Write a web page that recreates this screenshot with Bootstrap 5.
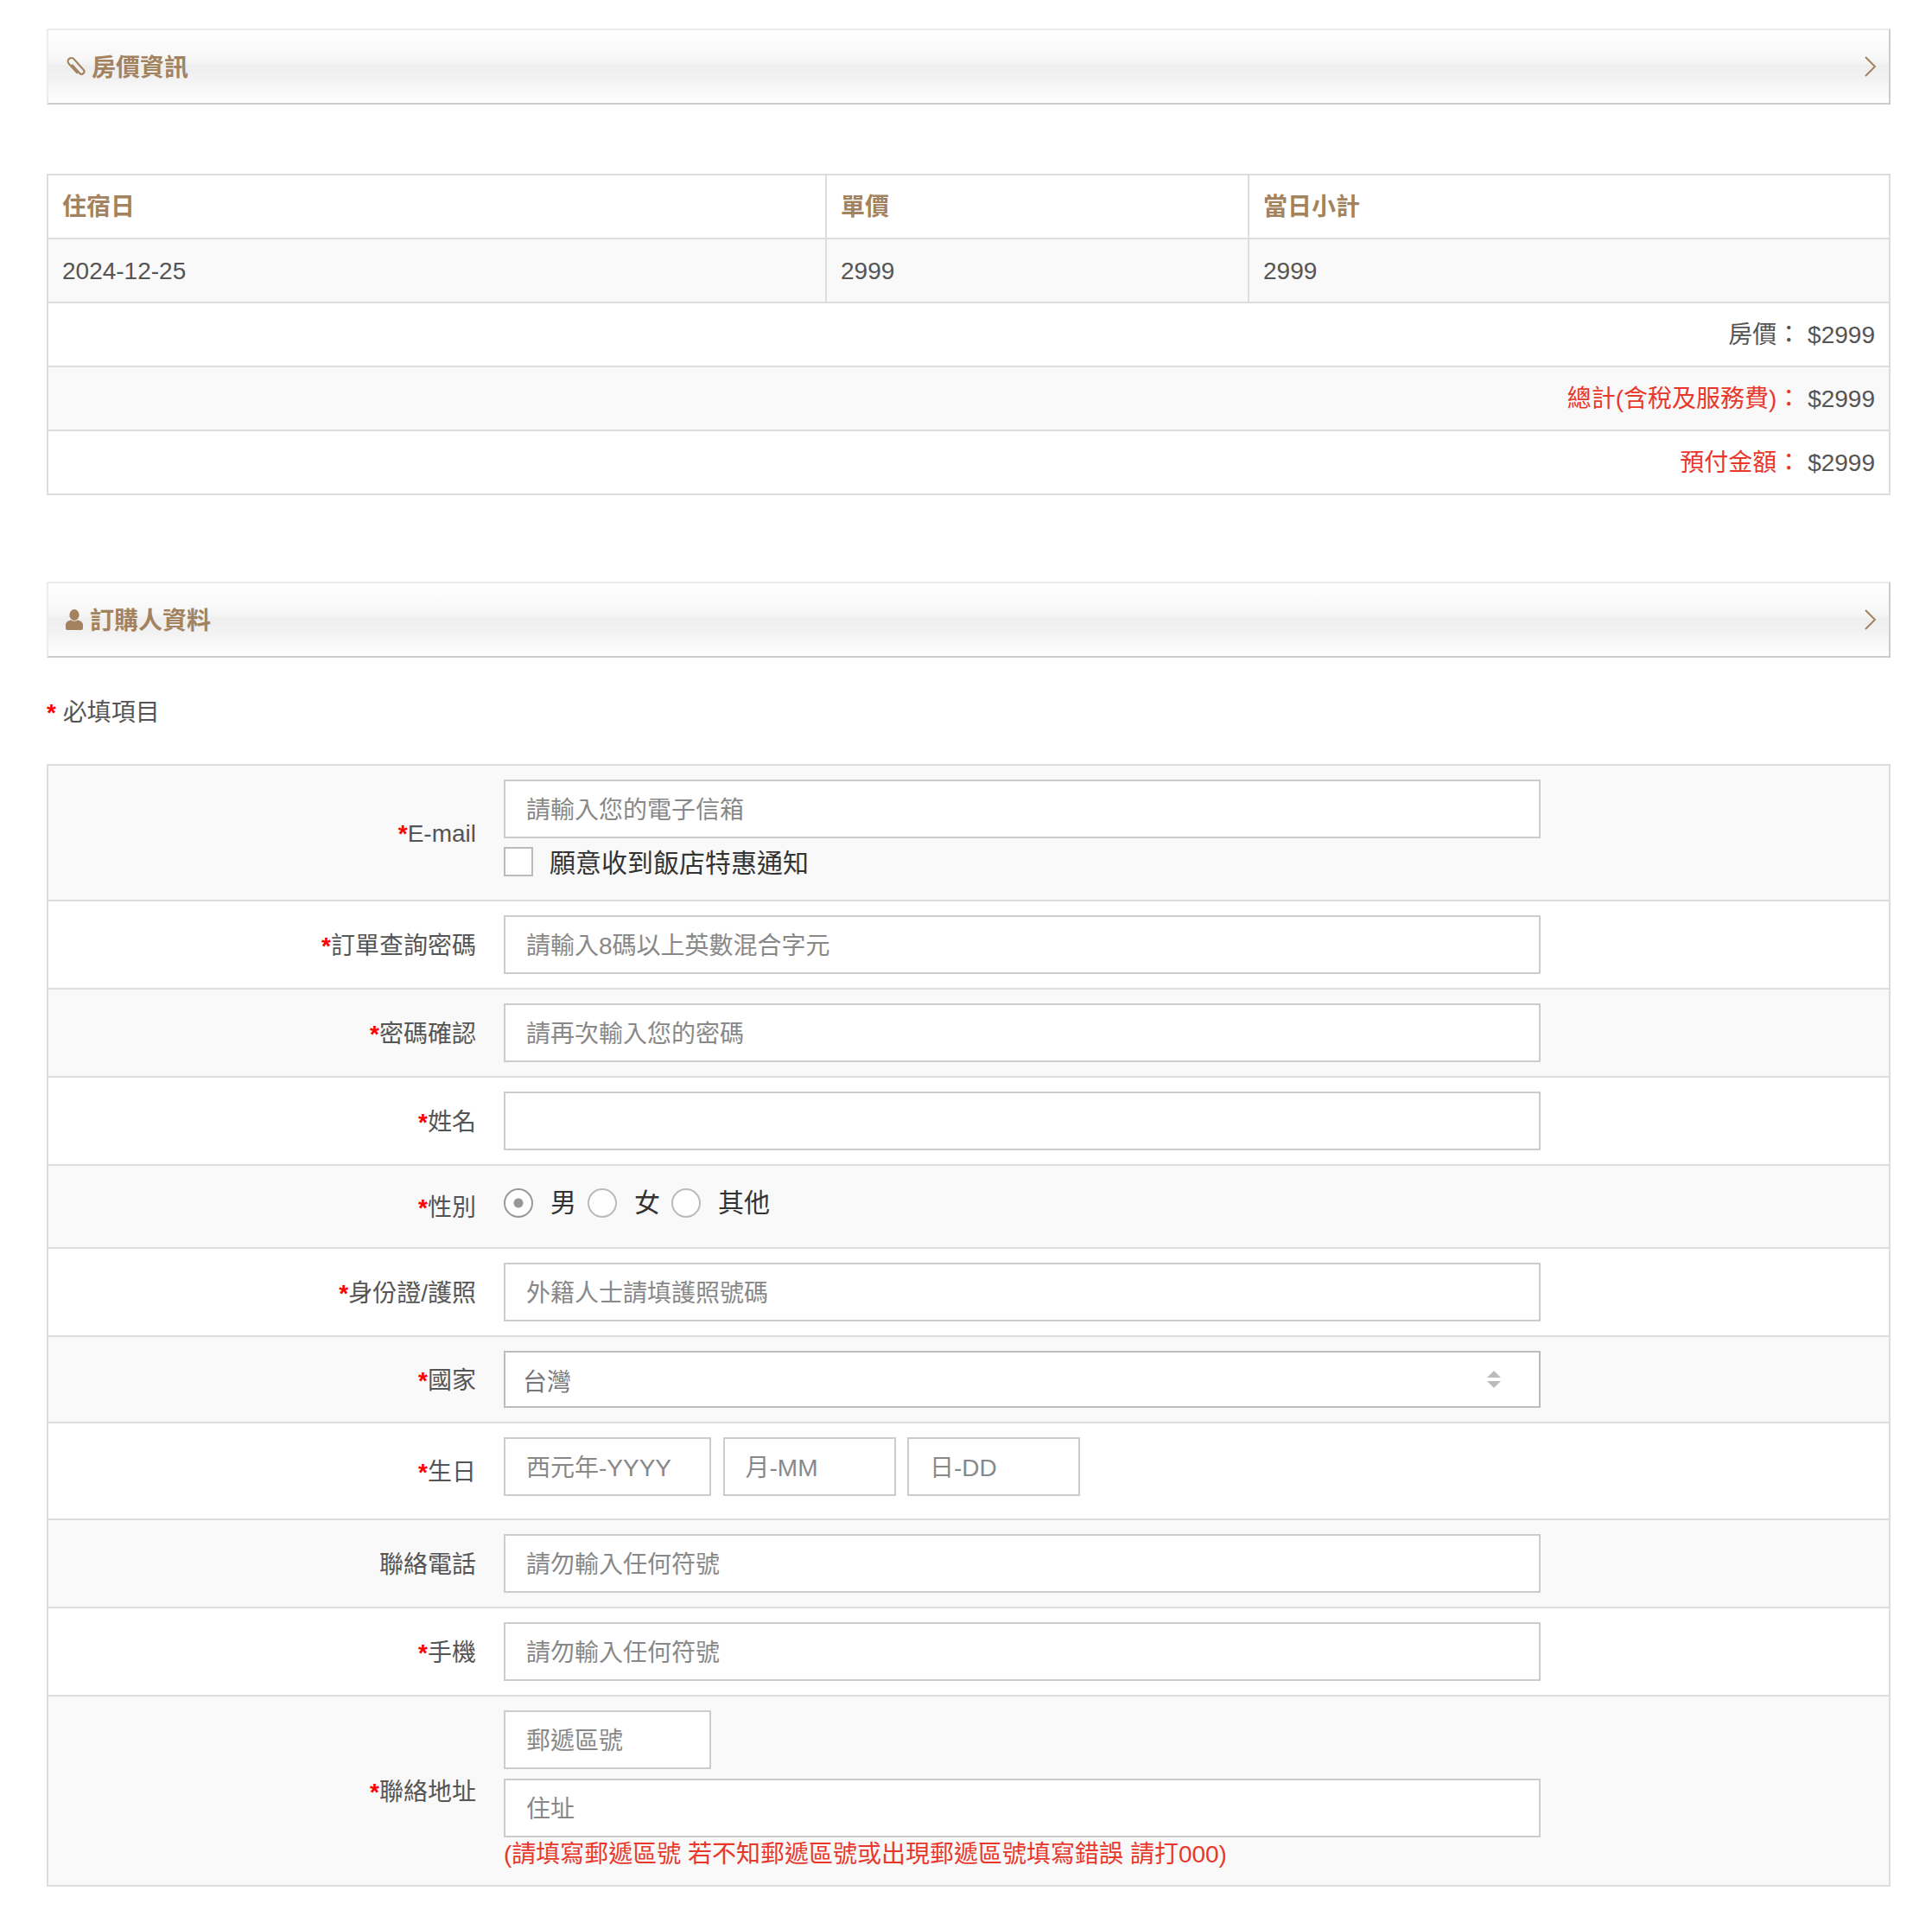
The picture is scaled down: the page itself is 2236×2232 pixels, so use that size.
<!DOCTYPE html>
<html lang="zh-Hant">
<head>
<meta charset="utf-8">
<title>訂購人資料</title>
<link rel="stylesheet" href="https://cdn.jsdelivr.net/npm/bootstrap@5.3.0/dist/css/bootstrap.min.css">
<style>
body{font-family:"Liberation Sans","Noto Sans CJK TC",sans-serif;font-size:28px;color:#555;background:#fff;line-height:1.4}
.page-wrap{padding:33px 48px 50px 54px}
.sect-bar{height:88px;padding:0 14px 0 20px;border-style:solid;border-width:2px;border-color:#ececec #ccc #ccc #ececec;background:linear-gradient(to bottom,#fff 0,#f7f7f7 40%,#eee 50%,#f3f3f3 70%,#fff 100%);color:#a3835f;font-weight:700;line-height:1}
.sect-bar svg{flex:none}
.bar-head{gap:6px}
.bar-head-user{gap:8px}
.bar-text{padding-top:3px}
.price-tbl{width:100%;table-layout:fixed;margin:80px 0 100px;border-collapse:collapse;border:2px solid #ddd}
.price-tbl td,.price-tbl th{height:74px;padding:2px 16px 0;border:2px solid #ddd;font-weight:400;vertical-align:middle}
.price-tbl th{color:#a3835f;font-weight:700}
.alt-row>*{background:#f9f9f9}
.hot-text{color:#e8382c}
.req-note{margin:44px 0 39px;line-height:40px}
.req-star{color:#f00;font-weight:700}
.form-tbl{width:100%;border-collapse:collapse;border:2px solid #ddd}
.form-tbl tr{border-bottom:2px solid #ddd}
.form-tbl .lbl-cell{width:508px;padding:3px 12px 0 0;text-align:right;vertical-align:middle}
.form-tbl .fld-cell{padding:16px 20px 16px 20px}
.fld-box{display:block;width:1200px;height:68px;padding:3px 24px 0;border:2px solid #ccc;border-radius:0;font-size:28px;color:#555;background-color:#fff;line-height:1.4}
.fld-box::placeholder{color:#888;opacity:1}
.fld-box.w-year{width:240px}
.fld-box.w-day{width:200px}
.sel-box{height:66px;padding:7px 20px 0;border-color:#bbb;color:#777;background-image:url("data:image/svg+xml,%3Csvg xmlns='http://www.w3.org/2000/svg' width='16' height='20'%3E%3Cpath fill='%23bbb' d='M8 0l8 8H0zM8 20L0 12h16z'/%3E%3C/svg%3E");background-size:16px 20px;background-position:right 44px center}
.opt-mark{width:34px;height:34px;margin:0;flex:none;border:2px solid #bbb;background-color:#fff}
.opt-mark[type=checkbox]{border-radius:0}
.opt-mark[type=radio]{border-radius:50%}
.opt-mark:checked[type=radio]{background-color:#fff;border-color:#999;background-image:radial-gradient(circle,#999 0,#999 5px,#fff 6px);background-size:auto}
.opt-text{font-size:30px;color:#333;line-height:34px;margin-left:19px}
.opt-row{height:34px;margin:10px 0 11px}
.opt-row .opt-text{padding-top:3px}
.gender-row{height:34px;margin:10px 0 18px}
.gender-row .opt-text{margin-left:20px;margin-right:13px}
.date-row{gap:13.5px;margin-bottom:10px}
.addr-gap{margin-top:11px}
.addr-note{color:#e8382c;line-height:39px}
</style>
</head>
<body>
<div class="page-wrap">
  <div class="sect-bar d-flex align-items-center justify-content-between">
    <span class="d-flex align-items-center bar-head">
      <svg width="24" height="26" viewBox="-12 -13 24 26" fill="none" stroke="#a3835f" stroke-width="2.200" stroke-linecap="round" aria-hidden="true"><g transform="rotate(-42)"><path d="M-4 6V-8a4 4 0 0 1 8 0V8.500a3 3 0 0 1-6 0V-4"/></g></svg>
      <span class="bar-text">房價資訊</span>
    </span>
    <svg width="14" height="24" viewBox="0 0 14 24" fill="none" stroke="#a3835f" stroke-width="2" aria-hidden="true"><path d="M1 1l11 11L1 23"/></svg>
  </div>

  <table class="price-tbl">
    <colgroup><col style="width:901px"><col style="width:489px"><col></colgroup>
    <tr><th>住宿日</th><th>單價</th><th>當日小計</th></tr>
    <tr class="alt-row"><td>2024-12-25</td><td>2999</td><td>2999</td></tr>
    <tr><td colspan="3" class="text-end">房價： $2999</td></tr>
    <tr class="alt-row"><td colspan="3" class="text-end"><span class="hot-text">總計(含稅及服務費)：</span> $2999</td></tr>
    <tr><td colspan="3" class="text-end"><span class="hot-text">預付金額：</span> $2999</td></tr>
  </table>

  <div class="sect-bar d-flex align-items-center justify-content-between">
    <span class="d-flex align-items-center bar-head-user">
      <svg width="20" height="24" viewBox="0 0 20 24" fill="#a3835f" aria-hidden="true"><ellipse cx="10" cy="6.500" rx="5.600" ry="6.500"/><path d="M0 22v-4c0-3 3-5 6-5.500 2.400 1.800 5.600 1.800 8 0 3 .5 6 2.500 6 5.500v4a2 2 0 0 1-2 2H2a2 2 0 0 1-2-2z"/></svg>
      <span class="bar-text">訂購人資料</span>
    </span>
    <svg width="14" height="24" viewBox="0 0 14 24" fill="none" stroke="#a3835f" stroke-width="2" aria-hidden="true"><path d="M1 1l11 11L1 23"/></svg>
  </div>

  <div class="req-note"><span class="req-star">*</span> 必填項目</div>

  <table class="form-tbl">
    <tr class="alt-row">
      <td class="lbl-cell"><span class="req-star">*</span>E-mail</td>
      <td class="fld-cell">
        <input class="form-control fld-box" placeholder="請輸入您的電子信箱">
        <div class="d-flex align-items-center opt-row"><input class="form-check-input opt-mark" type="checkbox"><span class="opt-text">願意收到飯店特惠通知</span></div>
      </td>
    </tr>
    <tr><td class="lbl-cell"><span class="req-star">*</span>訂單查詢密碼</td><td class="fld-cell"><input class="form-control fld-box" placeholder="請輸入8碼以上英數混合字元"></td></tr>
    <tr class="alt-row"><td class="lbl-cell"><span class="req-star">*</span>密碼確認</td><td class="fld-cell"><input class="form-control fld-box" placeholder="請再次輸入您的密碼"></td></tr>
    <tr><td class="lbl-cell"><span class="req-star">*</span>姓名</td><td class="fld-cell"><input class="form-control fld-box"></td></tr>
    <tr class="alt-row">
      <td class="lbl-cell"><span class="req-star">*</span>性別</td>
      <td class="fld-cell">
        <div class="d-flex align-items-center gender-row">
          <input class="form-check-input opt-mark" type="radio" name="sex" checked><span class="opt-text">男</span>
          <input class="form-check-input opt-mark" type="radio" name="sex"><span class="opt-text">女</span>
          <input class="form-check-input opt-mark" type="radio" name="sex"><span class="opt-text">其他</span>
        </div>
      </td>
    </tr>
    <tr><td class="lbl-cell"><span class="req-star">*</span>身份證/護照</td><td class="fld-cell"><input class="form-control fld-box" placeholder="外籍人士請填護照號碼"></td></tr>
    <tr class="alt-row"><td class="lbl-cell"><span class="req-star">*</span>國家</td><td class="fld-cell"><select class="form-select fld-box sel-box"><option>台灣</option></select></td></tr>
    <tr>
      <td class="lbl-cell"><span class="req-star">*</span>生日</td>
      <td class="fld-cell">
        <div class="d-flex date-row">
          <input class="form-control fld-box w-year" placeholder="西元年-YYYY">
          <input class="form-control fld-box w-day" placeholder="月-MM">
          <input class="form-control fld-box w-day" placeholder="日-DD">
        </div>
      </td>
    </tr>
    <tr class="alt-row"><td class="lbl-cell">聯絡電話</td><td class="fld-cell"><input class="form-control fld-box" placeholder="請勿輸入任何符號"></td></tr>
    <tr><td class="lbl-cell"><span class="req-star">*</span>手機</td><td class="fld-cell"><input class="form-control fld-box" placeholder="請勿輸入任何符號"></td></tr>
    <tr class="alt-row">
      <td class="lbl-cell"><span class="req-star">*</span>聯絡地址</td>
      <td class="fld-cell">
        <input class="form-control fld-box w-year" placeholder="郵遞區號">
        <input class="form-control fld-box addr-gap" placeholder="住址">
        <div class="addr-note">(請填寫郵遞區號 若不知郵遞區號或出現郵遞區號填寫錯誤 請打000)</div>
      </td>
    </tr>
  </table>
</div>
<script src="https://cdn.jsdelivr.net/npm/bootstrap@5.3.0/dist/js/bootstrap.bundle.min.js"></script>
</body>
</html>
